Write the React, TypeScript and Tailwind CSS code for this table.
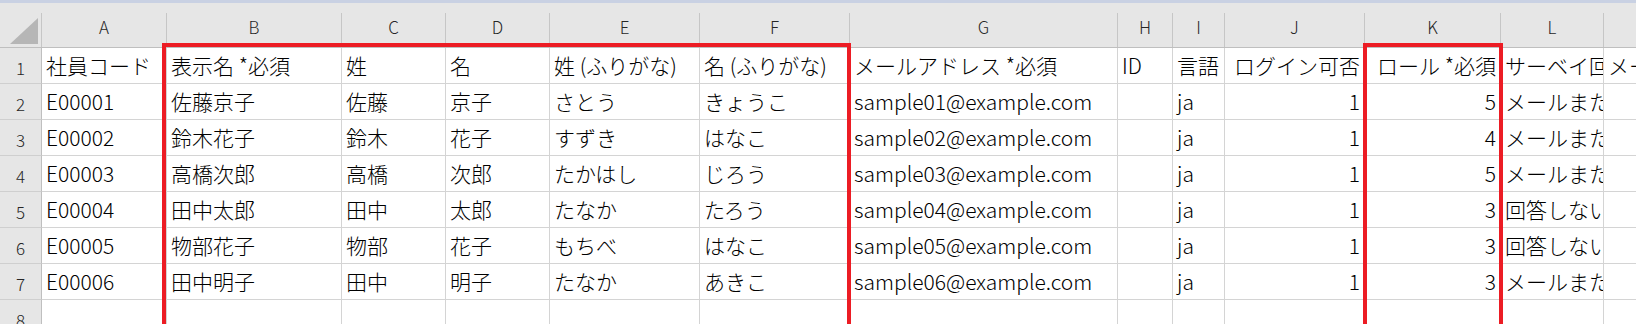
import React from 'react'

type Col = { key: string; width: number; align?: 'right' }

const columns: Col[] = [
    { key: 'A', width: 125 },
    { key: 'B', width: 175 },
    { key: 'C', width: 104 },
    { key: 'D', width: 104 },
    { key: 'E', width: 150 },
    { key: 'F', width: 150 },
    { key: 'G', width: 268 },
    { key: 'H', width: 55 },
    { key: 'I', width: 52 },
    { key: 'J', width: 140, align: 'right' },
    { key: 'K', width: 136, align: 'right' },
    { key: 'L', width: 103 },
    { key: 'M', width: 120 },
]

const header = ['社員コード', '表示名 *必須', '姓', '名', '姓 (ふりがな)', '名 (ふりがな)', 'メールアドレス *必須', 'ID', '言語', 'ログイン可否', 'ロール *必須', 'サーベイ回答方法', 'メールアドレス2']

const rows: string[][] = [
    ['E00001', '佐藤京子', '佐藤', '京子', 'さとう', 'きょうこ', 'sample01@example.com', '', 'ja', '1', '5', 'メールまたはチャット', ''],
    ['E00002', '鈴木花子', '鈴木', '花子', 'すずき', 'はなこ', 'sample02@example.com', '', 'ja', '1', '4', 'メールまたはチャット', ''],
    ['E00003', '高橋次郎', '高橋', '次郎', 'たかはし', 'じろう', 'sample03@example.com', '', 'ja', '1', '5', 'メールまたはチャット', ''],
    ['E00004', '田中太郎', '田中', '太郎', 'たなか', 'たろう', 'sample04@example.com', '', 'ja', '1', '3', '回答しない', ''],
    ['E00005', '物部花子', '物部', '花子', 'もちべ', 'はなこ', 'sample05@example.com', '', 'ja', '1', '3', '回答しない', ''],
    ['E00006', '田中明子', '田中', '明子', 'たなか', 'あきこ', 'sample06@example.com', '', 'ja', '1', '3', 'メールまたはチャット', ''],
]

const font = "font-['Noto_Sans_CJK_JP','Noto_Sans',sans-serif]"

export default function App() {
    // header row + data rows + one empty row at the bottom
    const allRows = [header, ...rows, columns.map(() => '')]

    return (
        <div className={`relative w-[1636px] h-[324px] overflow-hidden bg-white text-black font-light ${font}`}>
            <div className="h-[3px] bg-[#c9d1e3]" />

            {/* column headers */}
            <div className="flex h-[45px] bg-[#e6e6e6] border-b border-[#bfbfbf]">
                <div className="w-[42px] shrink-0 flex flex-col">
                    <div className="h-[10px]" />
                    <div className="flex-1 border-r border-[#c6c6c6] relative">
                        <svg className="absolute left-[10px] top-[5px]" width="28" height="26" viewBox="0 0 28 26">
                            <polygon points="0,26 28,26 28,0" fill="#b6b6b6" />
                        </svg>
                    </div>
                </div>
                {columns.map((col) => (
                    <div key={col.key} className="shrink-0 flex flex-col" style={{ width: col.width }}>
                        <div className="h-[10px]" />
                        <div className="flex-1 border-r border-[#c6c6c6] flex items-center justify-center pb-[8px] text-[17px] leading-none text-[#262626]">
                            {col.key}
                        </div>
                    </div>
                ))}
            </div>

            {/* rows */}
            {allRows.map((row, r) => (
                <div key={r} className="flex h-[36px]">
                    <div className="w-[42px] shrink-0 bg-[#e6e6e6] border-r border-b border-r-[#bfbfbf] border-b-[#cfcfcf] flex items-center justify-center pt-[3px] text-[17px] leading-none text-[#262626]">
                        {r + 1}
                    </div>
                    {columns.map((col, c) => (
                        <div
                            key={col.key}
                            className={`shrink-0 border-r border-b border-[#d4d4d4] flex items-center overflow-hidden whitespace-nowrap text-[21px] leading-none px-[4px] ${col.align === 'right' ? 'justify-end' : 'justify-start'}`}
                            style={{ width: col.width }}
                        >
                            {row[c]}
                        </div>
                    ))}
                </div>
            ))}

            {/* required columns */}
            <div className="absolute left-[162px] top-[43px] w-[689px] h-[300px] border-4 border-[#ec1c24]" />
            <div className="absolute left-[1363px] top-[43px] w-[140px] h-[300px] border-4 border-[#ec1c24]" />
        </div>
    )
}
